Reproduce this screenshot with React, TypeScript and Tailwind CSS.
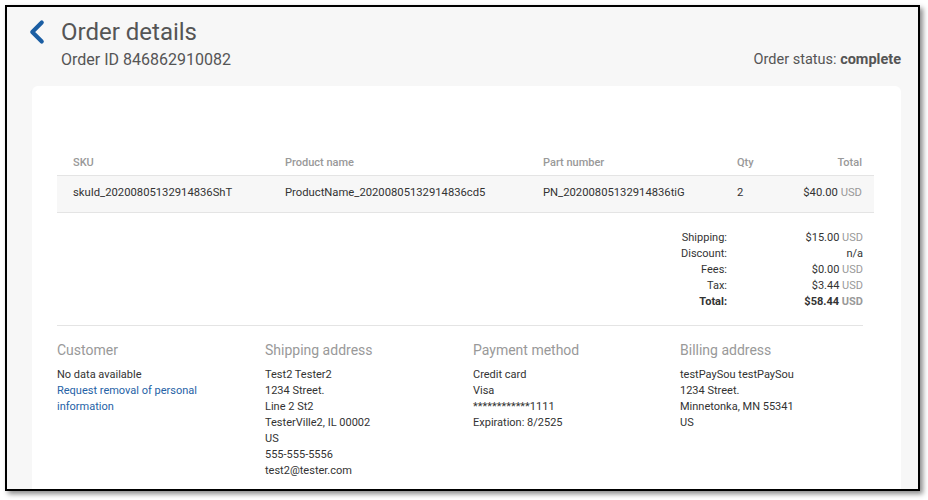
import { ChevronLeft } from 'lucide-react';

const ITEMS = [
  {
    sku: 'skuId_20200805132914836ShT',
    name: 'ProductName_20200805132914836cd5',
    part: 'PN_20200805132914836tiG',
    qty: 2,
    total: '$40.00',
  },
];

const SUMMARY = [
  { label: 'Shipping:', value: '$15.00', usd: true },
  { label: 'Discount:', value: 'n/a', usd: false },
  { label: 'Fees:', value: '$0.00', usd: true },
  { label: 'Tax:', value: '$3.44', usd: true },
  { label: 'Total:', value: '$58.44', usd: true, bold: true },
];

export default function App() {
  return (
    <div className="w-[928px] h-[500px] bg-white overflow-hidden pt-[5px] pl-[5px] font-['Roboto',sans-serif]">
      <div className="w-[915px] h-[486px] border-2 border-black shadow-[3px_3px_5px_rgba(0,0,0,0.45)] bg-[#f7f7f7] overflow-hidden pl-[25px] pr-[17px]">
        {/* Header */}
        <div className="flex items-end justify-between pt-[9px]">
          <div>
            <div className="flex items-center h-[32px]">
              <ChevronLeft className="w-[38px] h-[38px] shrink-0 text-[#1b5ea3] -ml-[14px]" strokeWidth={2.6} />
              <h1 className="ml-[5px] text-[24px] leading-[32px] text-[#555]">Order details</h1>
            </div>
            <div className="pl-[29px] text-[16px] leading-[22px] text-[#555] mt-[1px]">Order ID 846862910082</div>
          </div>
          <div className="text-[14.5px] leading-[22px] text-[#555]">
            Order status: <span className="font-bold">complete</span>
          </div>
        </div>

        {/* Card */}
        <div className="mt-[15px] bg-white rounded-t-[6px] h-[420px] pt-[66px] pl-[25px] pr-[27px]">
          <table className="w-full text-left border-collapse">
            <thead>
              <tr className="border-b border-[#e4e4e4] text-[11px] text-[#999] h-[23px]">
                <th className="pl-[16px] font-medium w-[228px]">SKU</th>
                <th className="font-medium w-[258px]">Product name</th>
                <th className="font-medium w-[194px]">Part number</th>
                <th className="font-medium">Qty</th>
                <th className="pr-[12px] font-medium text-right">Total</th>
              </tr>
            </thead>
            <tbody>
              {ITEMS.map((it, i) => (
                <tr key={i} className="bg-[#f7f7f7] border-b border-[#e4e4e4] h-[37px] text-[11.25px] text-[#333]">
                  <td className="pl-[16px]">{it.sku}</td>
                  <td>{it.name}</td>
                  <td>{it.part}</td>
                  <td>{it.qty}</td>
                  <td className="pr-[12px] text-right">
                    {it.total} <span className="text-[#999]">USD</span>
                  </td>
                </tr>
              ))}
            </tbody>
          </table>

          {/* Summary */}
          <div className="pr-[11px] pt-[17px] pb-[15px] flex justify-end text-[11px] leading-[16px] text-[#333]">
            <div className="text-right">
              {SUMMARY.map((s) => (
                <div key={s.label} className={s.bold ? 'font-bold' : ''}>{s.label}</div>
              ))}
            </div>
            <div className="text-right w-[136px]">
              {SUMMARY.map((s) => (
                <div key={s.label} className={s.bold ? 'font-bold' : ''}>
                  {s.value}
                  {s.usd && <span className="text-[#999]"> USD</span>}
                </div>
              ))}
            </div>
          </div>
          <div className="mr-[11px] border-t border-[#e4e4e4]" />

          {/* Info */}
          <div className="grid grid-cols-[208px_208px_207px_1fr] pt-[15px] text-[11px] leading-[16px] text-[#333]">
            <div>
              <h3 className="text-[14px] leading-[18px] text-[#999] mb-[8px]">Customer</h3>
              <div>No data available</div>
              <div className="text-[#2562a6] w-[160px]">Request removal of personal information</div>
            </div>
            <div>
              <h3 className="text-[14px] leading-[18px] text-[#999] mb-[8px]">Shipping address</h3>
              <div>Test2 Tester2</div>
              <div>1234 Street.</div>
              <div>Line 2 St2</div>
              <div>TesterVille2, IL 00002</div>
              <div>US</div>
              <div>555-555-5556</div>
              <div>test2@tester.com</div>
            </div>
            <div>
              <h3 className="text-[14px] leading-[18px] text-[#999] mb-[8px]">Payment method</h3>
              <div>Credit card</div>
              <div>Visa</div>
              <div>************1111</div>
              <div>Expiration: 8/2525</div>
            </div>
            <div>
              <h3 className="text-[14px] leading-[18px] text-[#999] mb-[8px]">Billing address</h3>
              <div>testPaySou testPaySou</div>
              <div>1234 Street.</div>
              <div>Minnetonka, MN 55341</div>
              <div>US</div>
            </div>
          </div>
        </div>
      </div>
    </div>
  );
}
